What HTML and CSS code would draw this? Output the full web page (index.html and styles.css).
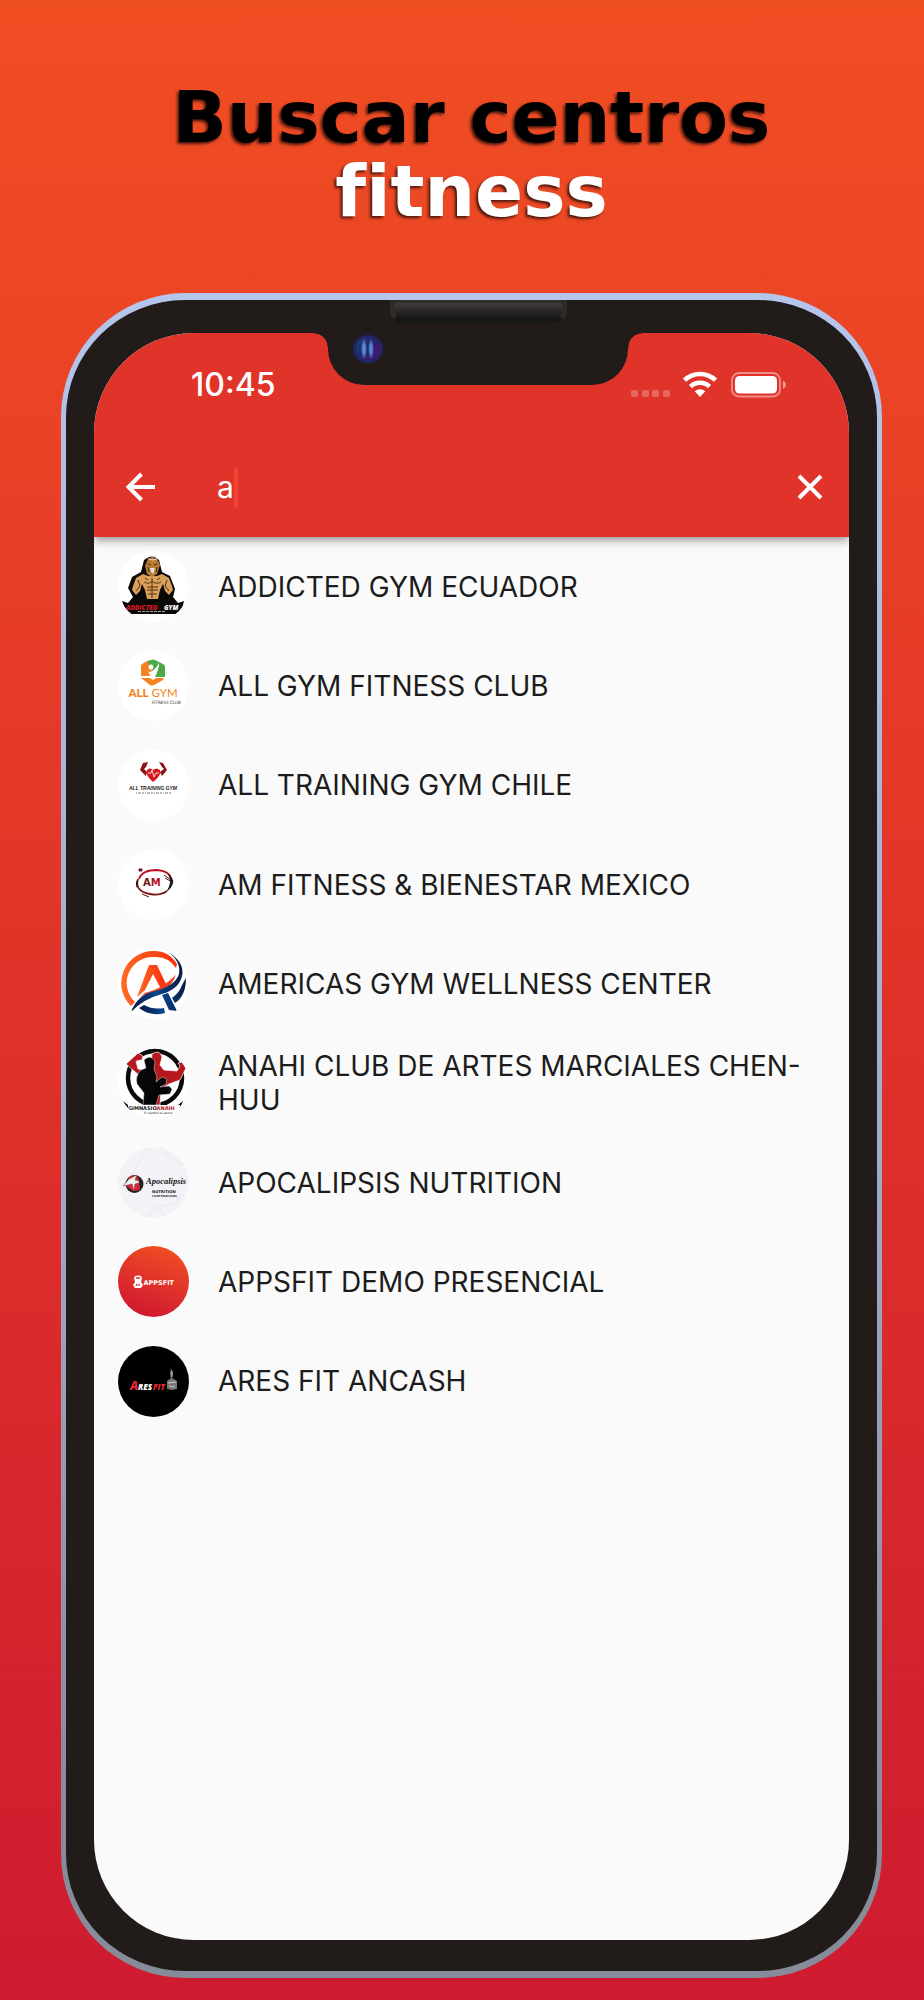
FILE: index.html
```html
<!DOCTYPE html>
<html lang="es">

<head>
    <meta charset="UTF-8">
    <meta name="viewport" content="width=device-width, initial-scale=1.0">
    <title>Buscar centros fitness</title>
    <link rel="stylesheet" href="styles.css">
</head>

<body>
    <h1 class="headline">Buscar centros <span>fitness</span></h1>

    <main class="phone">
        <div class="speaker"></div>
        <div class="screen">
            <div class="notch"><div class="camera"></div></div>

            <header class="app-bar">
                <div class="status">
                    <span class="time">10:45</span>
                    <svg class="status-icons" width="156" height="28" viewBox="0 0 156 28" aria-hidden="true">
                        <g fill="#fff" opacity=".25">
                            <rect x="0" y="19" width="7" height="7" rx="2" />
                            <rect x="11" y="19" width="7" height="7" rx="2" />
                            <rect x="21" y="19" width="7" height="7" rx="2" />
                            <rect x="32" y="19" width="7" height="7" rx="2" />
                        </g>
                        <g fill="none" stroke="#fff" stroke-width="4.6">
                            <path d="M53.500 9.200a22.500 22.500 0 0 1 31 0" />
                            <path d="M59.500 15.600a13.800 13.800 0 0 1 19 0" />
                        </g>
                        <path fill="#fff" d="M63.700 20.200a8 8 0 0 1 10.600 0L69 26z" />
                        <rect x="101" y="2" width="48" height="23.500" rx="7" fill="none" stroke="#fff" stroke-width="1.800" opacity=".45" />
                        <rect x="104" y="5" width="42" height="17.500" rx="4.500" fill="#fff" />
                        <path fill="#fff" opacity=".5" d="M152 9.500q3 1.500 3 4.200t-3 4.200z" />
                    </svg>
                </div>

                <form class="search">
                    <button type="button" class="icon-button" aria-label="Volver">
                        <svg width="30" height="30" viewBox="0 0 30 30"><path d="M30 15H4M16.500 2L3.500 15l13 13" /></svg>
                    </button>
                    <div class="field">
                        <input type="text" value="a" aria-label="Buscar">
                        <i class="caret"></i>
                    </div>
                    <button type="reset" class="icon-button" aria-label="Borrar">
                        <svg width="30" height="30" viewBox="0 0 30 30"><path d="M4 4l22 22M26 4L4 26" /></svg>
                    </button>
                </form>
            </header>

            <ul class="results">
                <li>
                    <svg class="logo" viewBox="0 0 71 71" aria-hidden="true">
                        <path d="M26 9q8-7 15 0l3 12 8 4 5 13-2 8 5 6 6-2-2 8-6 5H13l-6-5-3-8 6 2 5-6-5-9 4-11 9-5z" fill="#0b0908" />
                        <path d="M25 23l-7 4-3 8-1 4 4 5 4-4 2-7 3 6 2 9h11l2-9 3-6 2 7 4 4 4-5-1-4-3-8-7-4-5 2h-9z" fill="#d9a05b" />
                        <path d="M30 8l4-2 5 2 3 6-3 9-5 3-5-3-2-8z" fill="#b97a35" />
                        <path d="M30 8l5 1 4-1M31 5h7" stroke="#ded5c4" fill="none" />
                        <path d="M30 13l3 1M36 14l3-1M30 16l1 5M39 16l-1 5" stroke="#46280f" fill="none" />
                        <path d="M32 17h5l-1 4-1 2-2-2z" fill="#e6ddd5" />
                        <path d="M26 31q5 3 8-1 4 4 9 1M29 36h11M29 39h11M30 43h9M34 27v20M20 29l2 6-4 5M49 29l-2 6 4 5M27 27l3 2M42 27l-3 2" stroke="#58300f" fill="none" />
                        <text x="8" y="58.500" class="italic-heavy" font-size="6.500" fill="#d91824">ADDICTED</text>
                        <text x="46" y="58.500" class="italic-heavy" font-size="6.500" fill="#fff">GYM</text>
                        <path d="M20 60.500h28" stroke="#aaa" stroke-dasharray="3 1" />
                    </svg>
                    <span>ADDICTED GYM ECUADOR</span>
                </li>
                <li>
                    <svg class="logo" viewBox="0 0 71 71" aria-hidden="true">
                        <path d="M29 11l-5 3q-1 1-1 2v10l10 0q2-8-4-15z" fill="#f58220" />
                        <path d="M29 11l4-1q2-1 4 0l8 4q2 1 2 3v10H35q6-6 6-14-3 6-7 8z" fill="#4ca846" />
                        <path d="M23 28h9l3 2 3-2h8l-1 2-9 5q-2 1-4 0z" fill="#f58220" />
                        <circle cx="33" cy="17" r="2.500" fill="#fff" />
                        <path d="M28 19q3 5 7 2t6-8q-1 9-4 14h-5q0-4-4-8z" fill="#fff" />
                        <text x="10.500" y="47" font-family="Lato" font-weight="900" font-size="11.500" fill="#f58220">ALL</text>
                        <text x="33.500" y="47" font-family="Lato" font-size="11.500" fill="#f58220">GYM</text>
                        <text x="34" y="53.500" class="condensed" font-size="4.500" fill="#333">FITNESS CLUB</text>
                    </svg>
                    <span>ALL GYM FITNESS CLUB</span>
                </li>
                <li>
                    <svg class="logo" viewBox="0 0 71 71" aria-hidden="true">
                        <path d="M29 20q3-3 6 0 3-3 7 0 2 5-7 12-8-7-6-12z" fill="#d71920" />
                        <path d="M30 12l-2 5-2 2 3 3-1 4-6-6 3-7zM41 12l3 5 2 2-4 3 2 4 5-6-4-7z" fill="#8d1118" />
                        <path d="M30 23h3l1-3 2 7 2-4h3" fill="none" stroke="#fff" stroke-width=".8" />
                        <text x="11" y="39.500" font-family="Liberation Sans" font-style="italic" font-weight="700" font-size="5" fill="#222">ALL TRAINING GYM</text>
                        <path d="M18 43h35" stroke="#777" stroke-dasharray="1 1 3 1 2 1" />
                    </svg>
                    <span>ALL TRAINING GYM CHILE</span>
                </li>
                <li>
                    <svg class="logo" viewBox="0 0 71 71" aria-hidden="true">
                        <path d="M21 30q3-9 18-9 12 1 14 8" fill="none" stroke="#b5121b" stroke-width="1.800" />
                        <path d="M20 30q-4 12 12 15 10 2 17-3" fill="none" stroke="#7f1419" stroke-width="1.800" />
                        <path d="M50 25q6 4 5 9t-7 9q4-6 4-10 0-5-2-8zM19 31q-2 4 0 8l1-6z" fill="#171717" />
                        <path d="M21 20h3v2h-3zM24 45l7 3M46 26l7 5M47 29l7 4" fill="#b5121b" stroke="#63151a" />
                        <text x="25" y="37" font-family="DejaVu Sans" font-weight="700" font-size="10" fill="#63151a">A<tspan fill="#b5121b">M</tspan></text>
                    </svg>
                    <span>AM FITNESS &amp; BIENESTAR MEXICO</span>
                </li>
                <li>
                    <svg class="logo" viewBox="-2 0 71 71" aria-hidden="true">
                        <defs>
                            <linearGradient id="navy"><stop stop-color="#061a45" /><stop offset=".5" stop-color="#0b468c" /><stop offset="1" stop-color="#061a45" /></linearGradient>
                            <linearGradient id="flame"><stop stop-color="#ff6a24" /><stop offset="1" stop-color="#fb2f0d" /></linearGradient>
                        </defs>
                        <path d="M11 58A32 32 0 0 1 34 3q15 0 23 13l-1 4Q48 8 34 9A26 26 0 0 0 15 54z" fill="url(#flame)" />
                        <path d="M29 17h8l9 19-5 5-8-15-8 16-8 7z" fill="url(#flame)" />
                        <path d="M25 45q17-4 31-18-6 16-23 18-9 1-15 6z" fill="#fa4117" />
                        <path d="M48 4q17 10 14 24-3 13-20 18-19 5-31 18 6-17 24-21Q55 38 59 26 61 13 48 4z" fill="url(#navy)" />
                        <path d="M42 47l6-2 9 18-8-1zM19 60l5-3q9 5 20 3l1 5q-14 4-26-5zM66 30q0 18-11 25l-3-5q8-6 10-13z" fill="url(#navy)" />
                    </svg>
                    <span>AMERICAS GYM WELLNESS CENTER</span>
                </li>
                <li>
                    <svg class="logo" viewBox="0 0 71 71" aria-hidden="true">
                        <circle cx="37" cy="30" r="27" fill="none" stroke="#0a0a0a" stroke-width="4.500" />
                        <path d="M34 6q8-5 10 3l-2 8 4 5 13 1 3-5-2-3 4-1 4 6-6 12-11 4-8 5-1 16H32V24zM20 5l5 3-1 4-6 1 2 8 7 1-5 6-14-12z" fill="#b5181d" stroke="#fff" stroke-width=".7" />
                        <path d="M26 12q6-6 11 1l-1 8 3 8-1 5 6-5 5 2-1 5-6 3 9-1 3 3-2 5-11 1-3 10H25l1-12-7-9q-2-8 4-14l5-2z" fill="#060606" stroke="#ddd" stroke-width=".5" />
                        <path d="M5 53l5 4h50l5-4-3 7H9z" fill="#0a0a0a" />
                        <path d="M10 57h52v9H10z" fill="#fff" />
                        <text x="10" y="62" font-family="DejaVu Sans" font-weight="700" font-size="5" fill="#171717">GIMNASIO<tspan fill="#b5181d">ANAHI</tspan></text>
                        <text x="26" y="66" font-family="DejaVu Sans" font-size="3" fill="#222">El cambio es ahora</text>
                    </svg>
                    <span>ANAHI CLUB DE ARTES MARCIALES CHEN-HUU</span>
                </li>
                <li>
                    <svg class="logo" viewBox="0 0 71 71" aria-hidden="true">
                        <rect width="71" height="71" fill="#f3f3f7" />
                        <path d="M0 34l13-5 8-13 9-16M42 0l9 10 14 8M27 71l12-11 19-3 6-10M39 60l11 11" fill="none" stroke="#e8e8ee" stroke-width="1.200" />
                        <circle cx="16.500" cy="37" r="9" fill="#222" />
                        <path d="M11 30q8-4 10 3l1 10-7 1-7-5z" fill="#d32732" />
                        <path d="M5 39l6-7 8-4-2 5 4 1v2l-4 1-1 7-2-7-4 1z" fill="#eee" stroke="#78313b" stroke-width=".5" />
                        <text x="28" y="37" font-family="Liberation Serif" font-weight="700" font-style="italic" font-size="8.500" fill="#171717">Apocalipsis</text>
                        <text x="34" y="46" font-family="DejaVu Sans" font-weight="700" font-size="3.800" fill="#111">NUTRITION</text>
                        <text x="34" y="49.500" font-family="DejaVu Sans" font-weight="700" font-size="2.800" fill="#333">CORPORATIONG</text>
                    </svg>
                    <span>APOCALIPSIS NUTRITION</span>
                </li>
                <li>
                    <svg class="logo" viewBox="0 0 71 71" aria-hidden="true">
                        <defs><linearGradient id="appsfit" x1=".7" y1="0" x2=".3" y2="1"><stop stop-color="#f04e23" /><stop offset="1" stop-color="#cf1731" /></linearGradient></defs>
                        <rect width="71" height="71" fill="url(#appsfit)" />
                        <path d="M17 30q3-1 6 0l1 2-1 4 2 3-2 3h-6l-2-3 2-3-1-4z" fill="#fff" />
                        <path d="M18 32h4M18 40l1-2M21 38v2" stroke="#d92f2c" stroke-width="1.400" />
                        <text x="25.500" y="39.300" font-family="DejaVu Sans" font-weight="700" font-size="6.500" fill="#fff">APPSFIT</text>
                    </svg>
                    <span>APPSFIT DEMO PRESENCIAL</span>
                </li>
                <li>
                    <svg class="logo" viewBox="0 0 71 71" aria-hidden="true">
                        <rect width="71" height="71" fill="#000" />
                        <text x="12" y="43.500" class="italic-heavy" font-size="12" fill="#ed2530">A</text>
                        <text x="20" y="43.500" class="italic-heavy" font-size="8" fill="#fff">RES</text>
                        <text x="35" y="43.500" class="italic-heavy" font-size="8" fill="#ed2530">FIT</text>
                        <path d="M53 22l2 5-1 5 5 3v8l-5 1-5-1v-8l4-3-1-5z" fill="#777" />
                        <path d="M50 37l8-1M51 40l6 1M54 25v6" stroke="#ddd" stroke-width=".8" />
                    </svg>
                    <span>ARES FIT ANCASH</span>
                </li>
            </ul>
        </div>
    </main>
</body>

</html>
```
FILE: styles.css
```css
* {
    box-sizing: border-box;
}

body {
    display: flex;
    flex-direction: column;
    min-height: 100vh;
    margin: 0;
    padding: 81px 42px 22px 61px;
    background: linear-gradient(#f04e23, #e03229 50%, #ce1b30);
    font-family: Inter, 'Noto Sans', sans-serif;
}

.headline {
    margin: 0 0 64px;
    font-family: 'DejaVu Sans', sans-serif;
    font-size: 71px;
    line-height: 74px;
    text-align: center;
    color: #000;
    text-shadow: -2px 2px 3px rgba(0, 0, 0, 0.7);
}

.headline span {
    display: block;
    color: #fff;
}

/* phone frame */
.phone {
    flex: 1;
    display: flex;
    position: relative;
    padding: 33px 28px 31px;
    background:
        linear-gradient(#211b19, #211b19) padding-box,
        linear-gradient(#b6c5ec, #a2abcb 50%, #878c9b 90%) border-box;
    border: solid transparent;
    border-width: 7px 5px;
    border-radius: 124px;
}

.speaker {
    position: absolute;
    top: 0;
    left: 50%;
    width: 177px;
    height: 23px;
    margin-left: -82px;
    border: solid #2f2c27;
    border-width: 3px 5px 5px;
    border-bottom-color: #171816;
    border-radius: 0 0 12px 12px;
    background: linear-gradient(#403c3b, #171716);
}

.screen {
    flex: 1;
    position: relative;
    overflow: hidden;
    border-radius: 100px;
    background: #fafafa;
}

.notch {
    position: absolute;
    z-index: 2;
    top: 0;
    left: 50%;
    width: 300px;
    height: 52px;
    margin-left: -144px;
    border-radius: 0 0 36px 36px;
    background: #211b19;
}

/* small inverted corners where the notch meets the frame */
.notch::before,
.notch::after {
    content: '';
    position: absolute;
    top: 0;
    width: 14px;
    height: 14px;
}

.notch::before {
    right: 100%;
    background: radial-gradient(circle at 0 100%, transparent 13px, #211b19 14px);
}

.notch::after {
    left: 100%;
    background: radial-gradient(circle at 100% 100%, transparent 13px, #211b19 14px);
}

.camera {
    width: 30px;
    height: 28px;
    margin: 2px 0 0 25px;
    border: 3px solid #202568;
    border-radius: 50%;
    background:
        radial-gradient(ellipse 3px 11px at 8px 11px, #528bdc 40%, transparent),
        radial-gradient(ellipse 3px 11px at 15px 11px, #5186d8 40%, transparent),
        linear-gradient(120deg, #174477, #272363 50%, #570e73);
}

.app-bar {
    position: relative;
    height: 204px;
    background: #e0342b;
    box-shadow: 0 2px 10px rgba(0, 0, 0, 0.5);
    color: #fff;
}

.status {
    display: flex;
    justify-content: space-between;
    align-items: center;
    height: 104px;
    padding: 0 62px 0 97px;
}

.time {
    font-size: 32px;
    font-weight: 500;
    line-height: 56px;
}

.search {
    display: flex;
    align-items: center;
    height: 100px;
    padding: 0 24px 0 31px;
}

.icon-button {
    display: flex;
    padding: 0;
    border: none;
    background: none;
}

.icon-button svg {
    fill: none;
    stroke: #fff;
    stroke-width: 4;
}

.field {
    flex: 1;
    display: flex;
    align-items: center;
    padding-left: 62px;
}

.field input {
    field-sizing: content;
    padding: 0;
    border: none;
    outline: none;
    background: none;
    color: #fff;
    font: 30px/40px Inter, 'Noto Sans', sans-serif;
}

.caret {
    width: 4px;
    height: 41px;
    border-radius: 2px;
    background: #f44336;
}

.results {
    display: grid;
    grid-auto-rows: 1fr;
    min-height: 894px;
    margin: 0;
    padding: 0;
    list-style: none;
}

.results li {
    display: flex;
    align-items: center;
    gap: 29px;
    padding: 0 40px 0 24px;
    color: #1c1c1c;
    font-size: 28px;
    line-height: 34px;
}

.logo {
    flex: none;
    width: 71px;
    height: 71px;
    border-radius: 50%;
    background: #fff;
}

.italic-heavy {
    font-family: 'Open Sans', sans-serif;
    font-weight: 800;
    font-style: italic;
}

.condensed {
    font-family: 'DejaVu Sans Condensed', sans-serif;
    font-style: italic;
}
```
